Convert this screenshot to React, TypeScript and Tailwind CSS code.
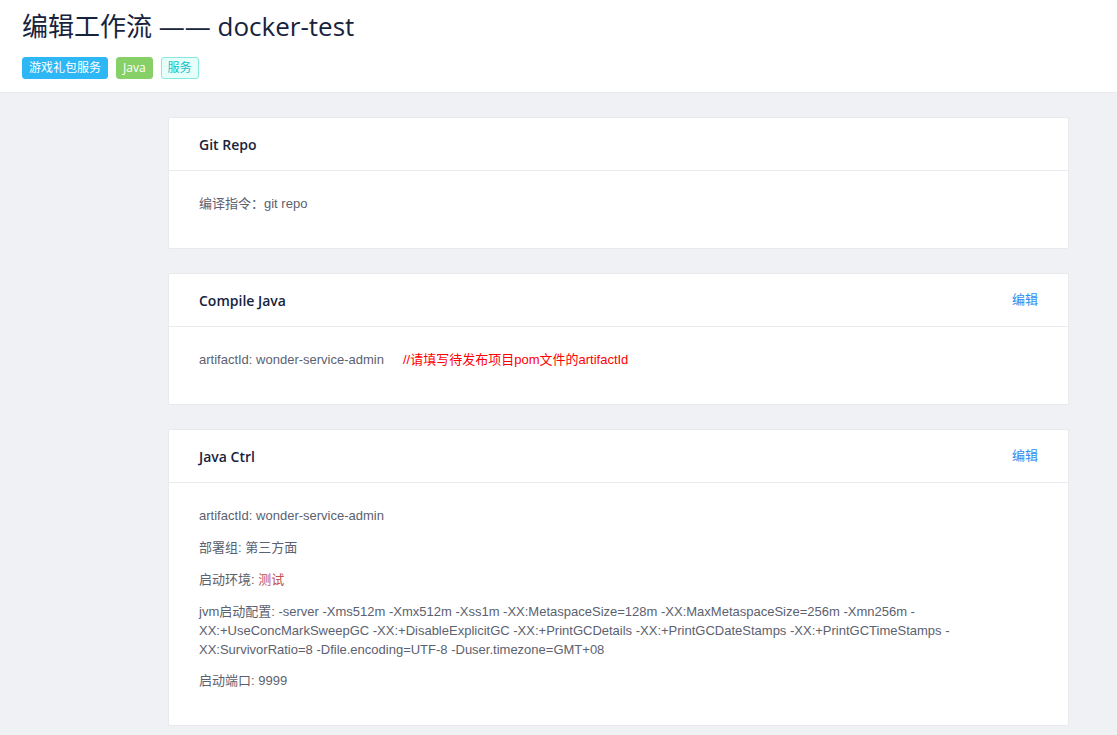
import React from 'react';

const font = { fontFamily: '"Open Sans", "Noto Sans CJK SC", sans-serif' };
const bodyFont = { fontFamily: '"Liberation Sans", "Noto Sans CJK SC", sans-serif' };

type Tag = { label: string; className: string };

const tags: Tag[] = [
  { label: '游戏礼包服务', className: 'bg-[#2db7f5] text-white border-[#2db7f5]' },
  { label: 'Java', className: 'bg-[#87d068] text-white border-[#87d068]' },
  { label: '服务', className: 'bg-[#e6fffb] text-[#13c2c2] border-[#87e8de]' },
];

function Card({ title, editable, children }: { title: string; editable?: boolean; children: React.ReactNode }) {
  return (
    <div className="bg-white border border-[#e8eaec] rounded-[2px]">
      <div className="h-[53px] px-[30px] flex items-center justify-between border-b border-[#e8eaec]">
        <span className="text-[14px] font-semibold text-[#17233d]">{title}</span>
        {editable && <a className="text-[13px] text-[#2d8cf0] cursor-pointer">编辑</a>}
      </div>
      <div className="px-[30px] pt-[23px] pb-[22px] text-[13px] leading-[20px] text-[#5c6170]" style={bodyFont}>
        {children}
      </div>
    </div>
  );
}

export default function App() {
  return (
    <div className="min-h-screen bg-[#f0f1f5]" style={font}>
      <div className="bg-white border-b border-[#e8eaec] px-[22px] pt-2 pb-[13px]">
        <h1 className="text-[26px] leading-9 text-[#17233d] font-normal">编辑工作流 —— docker-test</h1>
        <div className="mt-[13px] flex gap-2">
          {tags.map((t) => (
            <span
              key={t.label}
              className={`h-[22px] px-[6px] border rounded-[3px] text-[12px] leading-[20px] ${t.className}`}
            >
              {t.label}
            </span>
          ))}
        </div>
      </div>

      <div className="pl-[168px] pr-12 pt-6 pb-6 flex flex-col gap-6">
        <Card title="Git Repo">
          <p className="mb-3">编译指令：git repo</p>
        </Card>

        <Card title="Compile Java" editable>
          <p className="mb-3">
            artifactId: wonder-service-admin
            <span className="ml-[19px] text-[#ff0000]">//请填写待发布项目pom文件的artifactId</span>
          </p>
        </Card>

        <Card title="Java Ctrl" editable>
          <p className="mb-3">artifactId: wonder-service-admin</p>
          <p className="mb-3">部署组: 第三方面</p>
          <p className="mb-3">
            启动环境: <span className="text-[#c0504d]">测试</span>
          </p>
          <p className="mb-3 leading-[19px]">
            jvm启动配置: -server -Xms512m -Xmx512m -Xss1m -XX:MetaspaceSize=128m -XX:MaxMetaspaceSize=256m -Xmn256m
            -XX:+UseConcMarkSweepGC -XX:+DisableExplicitGC -XX:+PrintGCDetails -XX:+PrintGCDateStamps
            -XX:+PrintGCTimeStamps -XX:SurvivorRatio=8 -Dfile.encoding=UTF-8 -Duser.timezone=GMT+08
          </p>
          <p className="mb-3">启动端口: 9999</p>
        </Card>
      </div>
    </div>
  );
}
